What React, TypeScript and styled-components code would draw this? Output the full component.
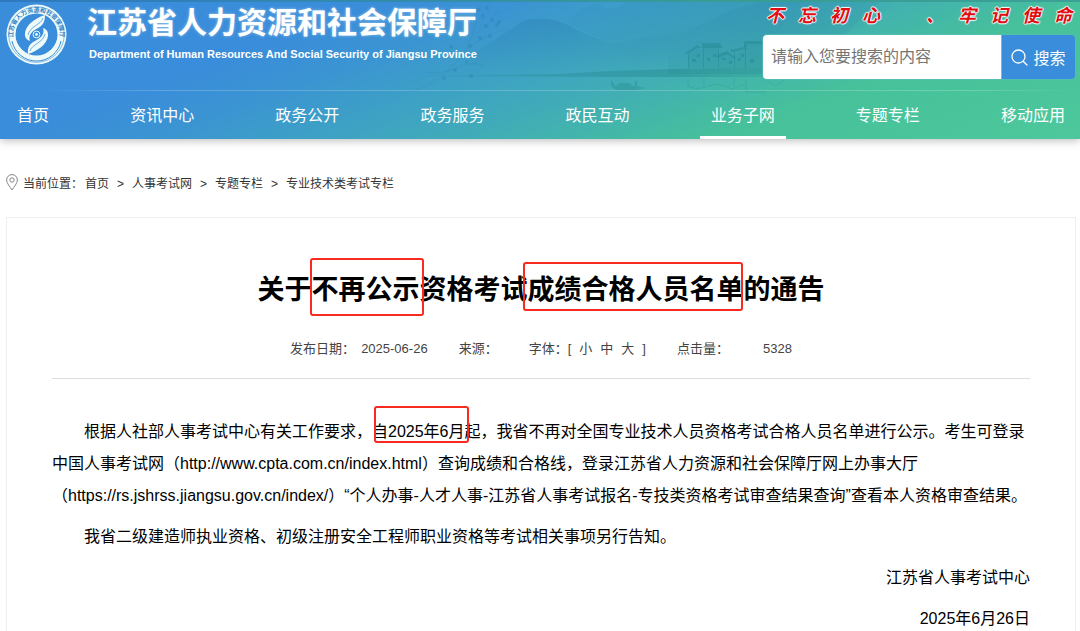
import React from "react";
import styled, { createGlobalStyle } from "styled-components";

const GlobalStyle = createGlobalStyle`
  *, *::before, *::after { box-sizing: border-box; }
  html { scrollbar-width: none; }
  body {
    margin: 0;
    background: #fff;
    color: #000;
    font-family: "Liberation Sans", "Noto Sans CJK SC", sans-serif;
    font-size: 16px;
    text-spacing-trim: space-all;
  }
  a { color: inherit; text-decoration: none; }
  h1, p { margin: 0; font-weight: inherit; }
`;

const Header = styled.header`
  position: relative;
  background: linear-gradient(160deg, #3a8dda 0%, #3a8dda 26%, #3b94d2 36%, #3da0c6 46%, #40aaba 56%, #43b5ab 65%, #47c19a 75%, #4dc79b 100%);
  border-top: 2px solid rgba(30, 90, 140, 0.35);
  box-shadow: 0 2px 8px rgba(0, 0, 0, 0.25);
`;

const Scenery = styled.svg`
  position: absolute;
  inset: 0;
  width: 100%;
  height: 100%;
`;

const Masthead = styled.div`
  position: relative;
  display: flex;
  justify-content: space-between;
  height: 88px;
  padding: 0 4px 0 6px;
`;

const Brand = styled.a`
  display: flex;
  gap: 20px;
  color: #fff;
`;

const Emblem = styled.svg`
  flex: none;
  width: 61px;
  height: 61px;
  margin-top: 2px;
`;

const BrandText = styled.span`
  display: flex;
  flex-direction: column;
  white-space: nowrap;
`;

const BrandName = styled.span`
  font-family: "Noto Sans CJK SC", sans-serif;
  font-weight: 700;
  font-size: 30px;
  line-height: 36px;
  text-shadow: 0 0 3px rgba(255, 255, 255, 0.5);
`;

const BrandEnglish = styled.span`
  font-weight: 700;
  font-size: 11px;
  line-height: 32px;
  padding-left: 2px;
`;

const SearchColumn = styled.div`
  width: 314px;
`;

const Motto = styled.p`
  display: flex;
  justify-content: space-between;
  height: 32px;
  padding: 0 4px;
  font-family: "Noto Sans CJK SC", sans-serif;
  font-size: 18px;
  font-style: italic;
  font-weight: 700;
  line-height: 24px;
  color: #e00d12;
  text-shadow: 1px 0 1px #fff, -1px 0 1px #fff, 0 1px 1px #fff, 0 -1px 1px #fff;

  span { width: 18px; text-align: center; }
`;

const SearchForm = styled.form`
  display: flex;
  height: 46px;
  border: 1px solid rgba(90, 190, 190, 0.6);
  border-radius: 5px;
  overflow: hidden;
`;

const SearchInput = styled.input`
  flex: 1;
  min-width: 0;
  border: 0;
  padding: 0 8px;
  background: #fff;
  font: inherit;
  color: #333;
  outline: none;

  &::placeholder { color: #757575; opacity: 1; }
`;

const SearchButton = styled.button`
  display: flex;
  align-items: center;
  justify-content: center;
  gap: 5px;
  width: 74px;
  padding: 0;
  border: 0;
  border-left: 1px solid #6cc0cf;
  background: #3a8dda;
  color: #fff;
  font: inherit;
  cursor: pointer;
`;

const Nav = styled.nav`
  position: relative;
  display: flex;
  justify-content: space-between;
  padding: 0 4px 0 6px;

  &::before {
    content: "";
    position: absolute;
    inset: 0 0 auto 0;
    height: 1px;
    background: linear-gradient(90deg, transparent 3%, rgba(255, 255, 255, 0.2) 15%, rgba(255, 255, 255, 0.2) 90%, transparent);
  }
`;

const NavLink = styled.a<{ $active: boolean }>`
  height: 49px;
  padding: 0 11px;
  line-height: 52px;
  color: #fff;
  white-space: nowrap;
  border-bottom: 3px solid ${(p) => (p.$active ? "#fff" : "transparent")};
`;

const Main = styled.main`
  padding: 0 4px 0 6px;
`;

const Breadcrumb = styled.nav`
  display: flex;
  align-items: center;
  height: 78px;
  padding-top: 8px;
  font-size: 12px;
  color: #333;

  svg { margin-right: 5px; }
`;

const CrumbLabel = styled.span`
  margin-right: 2px;
`;

const Crumb = styled.a`
  & + &::before {
    content: ">";
    display: inline-block;
    width: 23px;
    text-align: center;
  }
`;

const Article = styled.article`
  border: 1px solid #eee;
  border-bottom: 0;
  padding: 48px 45px 0;
`;

const Title = styled.h1`
  text-align: center;
  font-size: 27px;
  font-weight: 700;
  line-height: 48px;
`;

const Marked = styled.span<{ $inset: string }>`
  position: relative;

  &::after {
    content: "";
    position: absolute;
    inset: ${(p) => p.$inset};
    border: 2px solid #f92a20;
    border-radius: 3px;
    pointer-events: none;
  }
`;

const Meta = styled.div`
  display: flex;
  justify-content: center;
  gap: 31px;
  height: 65px;
  padding-top: 20px;
  border-bottom: 1px solid #ddd;
  font-size: 13px;
  line-height: 30px;
  color: #444;
`;

const MetaItem = styled.span<{ $gap?: number }>`
  display: flex;
  gap: ${(p) => p.$gap ?? 0}px;
  white-space: nowrap;
`;

const Body = styled.div`
  padding-top: 37px;
`;

const Paragraph = styled.p<{ $signature?: boolean }>`
  margin-bottom: 9px;
  line-height: 32px;
  text-indent: ${(p) => (p.$signature ? "0" : "2em")};
  text-align: ${(p) => (p.$signature ? "right" : "left")};

  &:last-child { margin-bottom: 0; }
`;

const Url = styled.span`
  white-space: nowrap;
`;

const NAV = ["首页", "资讯中心", "政务公开", "政务服务", "政民互动", "业务子网", "专题专栏", "移动应用"];
const CRUMBS = ["首页", "人事考试网", "专题专栏", "专业技术类考试专栏"];
const MOTTO = ["不", "忘", "初", "心", "", "、", "牢", "记", "使", "命"];
const BLOSSOMS = [
  [478, 8], [483, 14], [487, 6], [492, 18], [497, 23], [486, 24], [480, 36], [470, 44],
  [467, 60], [490, 34], [455, 68], [444, 76], [471, 74], [499, 20], [451, 45],
];

function HeaderScenery() {
  return (
    <Scenery viewBox="0 0 1080 137" preserveAspectRatio="xMaxYMin slice" aria-hidden="true">
      <defs>
        <linearGradient id="ridge" x1="0" y1="0" x2="0" y2="1">
          <stop offset="0" stopColor="#1f6fa0" stopOpacity=".24" />
          <stop offset="1" stopColor="#1f6fa0" stopOpacity="0" />
        </linearGradient>
        <linearGradient id="haze" x1="0" y1="0" x2="1" y2="0">
          <stop offset="0" stopColor="#1f6fa0" stopOpacity=".06" />
          <stop offset=".6" stopColor="#1f6fa0" stopOpacity=".18" />
          <stop offset="1" stopColor="#1f6fa0" stopOpacity="0" />
        </linearGradient>
        <linearGradient id="shore" x1="0" y1="0" x2="1" y2="0">
          <stop offset="0" stopColor="#1d6f80" stopOpacity=".1" />
          <stop offset=".6" stopColor="#1d7f80" stopOpacity=".36" />
          <stop offset="1" stopColor="#1d8f80" stopOpacity=".05" />
        </linearGradient>
      </defs>
      <path fill="url(#ridge)" d="M470 54 Q500 34 516 24 Q524 16 538 17 Q552 16 566 22 Q590 36 616 42 Q640 46 668 50 V74 H470Z" />
      <path fill="url(#haze)" d="M566 20 Q576 10 586 5 Q596 0 604 5 Q616 10 626 0 H900 Q840 40 760 72 H668 V50 Q640 46 616 42 Q590 34 566 20Z" />
      <path fill="url(#ridge)" d="M616 42 Q640 34 668 33 Q700 26 730 8 L760 0 H880 L800 72 H640Z" opacity=".5" />
      <path fill="url(#shore)" d="M400 74 L560 72 Q640 66 780 66 H860 V75 H620Z" />
      <g fill="#1c7f86" fillOpacity=".1">
        <path d="M688 51 L697 45 L703 49 V44 H718 V51 L727 50 L733 55 L745 48 V42 H764 V66 H688Z" />
      </g>
      <g fill="#1c7f86" fillOpacity=".34">
        <path d="M685 51 L697 43 L702 46 V41 H720 L723 46 H702 L697 46 L686 53ZM716 54 L727 49 L736 56 L733 56 L727 52 L718 56ZM730 48 L744 45 V39 H766 V42 H746 V47 L732 50Z" />
        <path d="M688 52h1v14h-1zM703 46h1v20h-1zM718 46h1v20h-1zM734 50h1v16h-1zM745 42h1v24h-1z" />
        <path d="M692 57h4v3h-4zM697 52h3v3h-3zM707 56h3v3h-3zM713 52h3v3h-3zM722 56h4v2h-4zM729 59h3v3h-3zM738 56h3v3h-3zM741 52h3v3h-3zM750 57h4v4h-4z" />
      </g>
      <path fill="#1c7f86" fillOpacity=".28" d="M611 77 L615 84 H617 Q618 80 624 81 Q631 80 632 84 H635 V79 H637 V84 L645 86 L636 88 H616 L611 84Z" />
      <path fill="none" stroke="#1c7f86" strokeOpacity=".18" d="M688 76 V84 L697 87 L718 82 L732 87 L745 82 M704 76 V84 M734 76 V84 M746 76 V90 H766 M768 80 L776 84 L786 77" />
      <path
        fill="none"
        stroke="#246a98"
        strokeOpacity=".14"
        d="M410 90 Q440 82 460 56 Q475 36 502 28 M425 70 Q440 74 462 64 Q480 58 484 66 M464 50 Q476 34 478 6 M476 32 Q490 20 500 8"
      />
      <g fill="#246a98" fillOpacity=".2">
        {BLOSSOMS.map(([x, y]) => (
          <circle key={`${x}-${y}`} cx={x} cy={y} r="2" />
        ))}
      </g>
    </Scenery>
  );
}

function BrandEmblem() {
  return (
    <Emblem viewBox="0 0 61 61" aria-hidden="true">
      <defs>
        <path id="emblem-arc" d="M7.5 36 A23.5 23.5 0 1 1 53.5 36" />
      </defs>
      <circle cx="30.5" cy="30.5" r="30" fill="#eefaf8" />
      <circle cx="30.5" cy="30.5" r="27.8" fill="none" stroke="#3a8dda" strokeWidth=".6" />
      <circle cx="30.5" cy="30.5" r="21" fill="#3a8dda" />
      <path fill="none" stroke="#3a8dda" strokeWidth="1" d="M6 37 A25 25 0 0 0 55 37" />
      <text fill="#2f7fc4" fontSize="6" fontWeight="700" fontFamily="Noto Sans CJK SC, sans-serif">
        <textPath href="#emblem-arc" startOffset="50%" textAnchor="middle">江苏省人力资源和社会保障厅</textPath>
      </text>
      <path fill="#eefaf8" d="M39 11 C29 14 20 21 19 29 C18.5 34 21 36 24 37 C22 31 26 27 32 24 C36 22 39 19 39 11Z" />
      <path fill="#eefaf8" d="M22 50 C32 47 41 40 42 32 C42.5 27 40 25 37 24 C39 30 35 34 29 37 C25 39 21 42 22 50Z" />
      <circle cx="30.5" cy="30.5" r="3.4" fill="#3a8dda" stroke="#eefaf8" strokeWidth="1" />
      <circle cx="30.5" cy="30.5" r="1.4" fill="#eefaf8" />
      <path fill="none" stroke="#3a8dda" strokeWidth=".7" d="M37 14 C35 21 24 22 22 31 M24 47 C26 40 37 39 39 30" />
    </Emblem>
  );
}

export default function App() {
  return (
    <>
      <GlobalStyle />
      <Header>
        <HeaderScenery />
        <Masthead>
          <Brand href="#">
            <BrandEmblem />
            <BrandText>
              <BrandName>江苏省人力资源和社会保障厅</BrandName>
              <BrandEnglish>Department of Human Resources And Social Security of Jiangsu Province</BrandEnglish>
            </BrandText>
          </Brand>
          <SearchColumn>
            <Motto>
              {MOTTO.map((char, i) => (
                <span key={i}>{char}</span>
              ))}
            </Motto>
            <SearchForm onSubmit={(e) => e.preventDefault()}>
              <SearchInput type="text" aria-label="搜索内容" placeholder="请输入您要搜索的内容" />
              <SearchButton type="submit">
                <svg width="17" height="17" viewBox="0 0 17 17" fill="none" stroke="#fff" strokeWidth="1.3" strokeLinecap="round" aria-hidden="true">
                  <circle cx="7.5" cy="7.5" r="6.5" />
                  <path d="M12.2 12.2 L16 16" />
                </svg>
                搜索
              </SearchButton>
            </SearchForm>
          </SearchColumn>
        </Masthead>
        <Nav>
          {NAV.map((label) => (
            <NavLink key={label} href="#" $active={label === "业务子网"}>
              {label}
            </NavLink>
          ))}
        </Nav>
      </Header>

      <Main>
        <Breadcrumb aria-label="当前位置">
          <svg width="12" height="17" viewBox="0 0 12 17" fill="none" stroke="#888" aria-hidden="true">
            <path d="M6 16 C4 12.5 .6 9.5 .6 6 A5.4 5.4 0 0 1 11.4 6 C11.4 9.5 8 12.5 6 16Z" />
            <circle cx="6" cy="6" r="2.2" />
          </svg>
          <CrumbLabel>当前位置：</CrumbLabel>
          {CRUMBS.map((label) => (
            <Crumb key={label} href="#">
              {label}
            </Crumb>
          ))}
        </Breadcrumb>

        <Article>
          <Title>
            关于
            <Marked $inset="-17px -4px -11px -2px">不再公示</Marked>
            资格考试
            <Marked $inset="-13px 1px -6px -5px">成绩合格人员名单</Marked>
            的通告
          </Title>
          <Meta>
            <MetaItem $gap={6}>
              <span>发布日期：</span>
              <time dateTime="2025-06-26">2025-06-26</time>
            </MetaItem>
            <MetaItem>来源：</MetaItem>
            <MetaItem $gap={8}>
              <span>字体：[</span>
              <a href="#">小</a>
              <a href="#">中</a>
              <a href="#">大</a>
              <span>]</span>
            </MetaItem>
            <MetaItem $gap={34}>
              <span>点击量：</span>
              <span>5328</span>
            </MetaItem>
          </Meta>
          <Body>
            <Paragraph>
              根据人社部人事考试中心有关工作要求，
              <Marked $inset="-17px -4px -3px 2px">自2025年6月</Marked>
              起，我省不再对全国专业技术人员资格考试合格人员名单进行公示。考生可登录中国人事考试网（http://www.cpta.com.cn/index.html）查询成绩和合格线，登录江苏省人力资源和社会保障厅网上办事大厅
              <Url>（https://rs.jshrss.jiangsu.gov.cn/index/）</Url>
              “个人办事-人才人事-江苏省人事考试报名-专技类资格考试审查结果查询”查看本人资格审查结果。
            </Paragraph>
            <Paragraph>我省二级建造师执业资格、初级注册安全工程师职业资格等考试相关事项另行告知。</Paragraph>
            <Paragraph $signature>江苏省人事考试中心</Paragraph>
            <Paragraph $signature>2025年6月26日</Paragraph>
          </Body>
        </Article>
      </Main>
    </>
  );
}
